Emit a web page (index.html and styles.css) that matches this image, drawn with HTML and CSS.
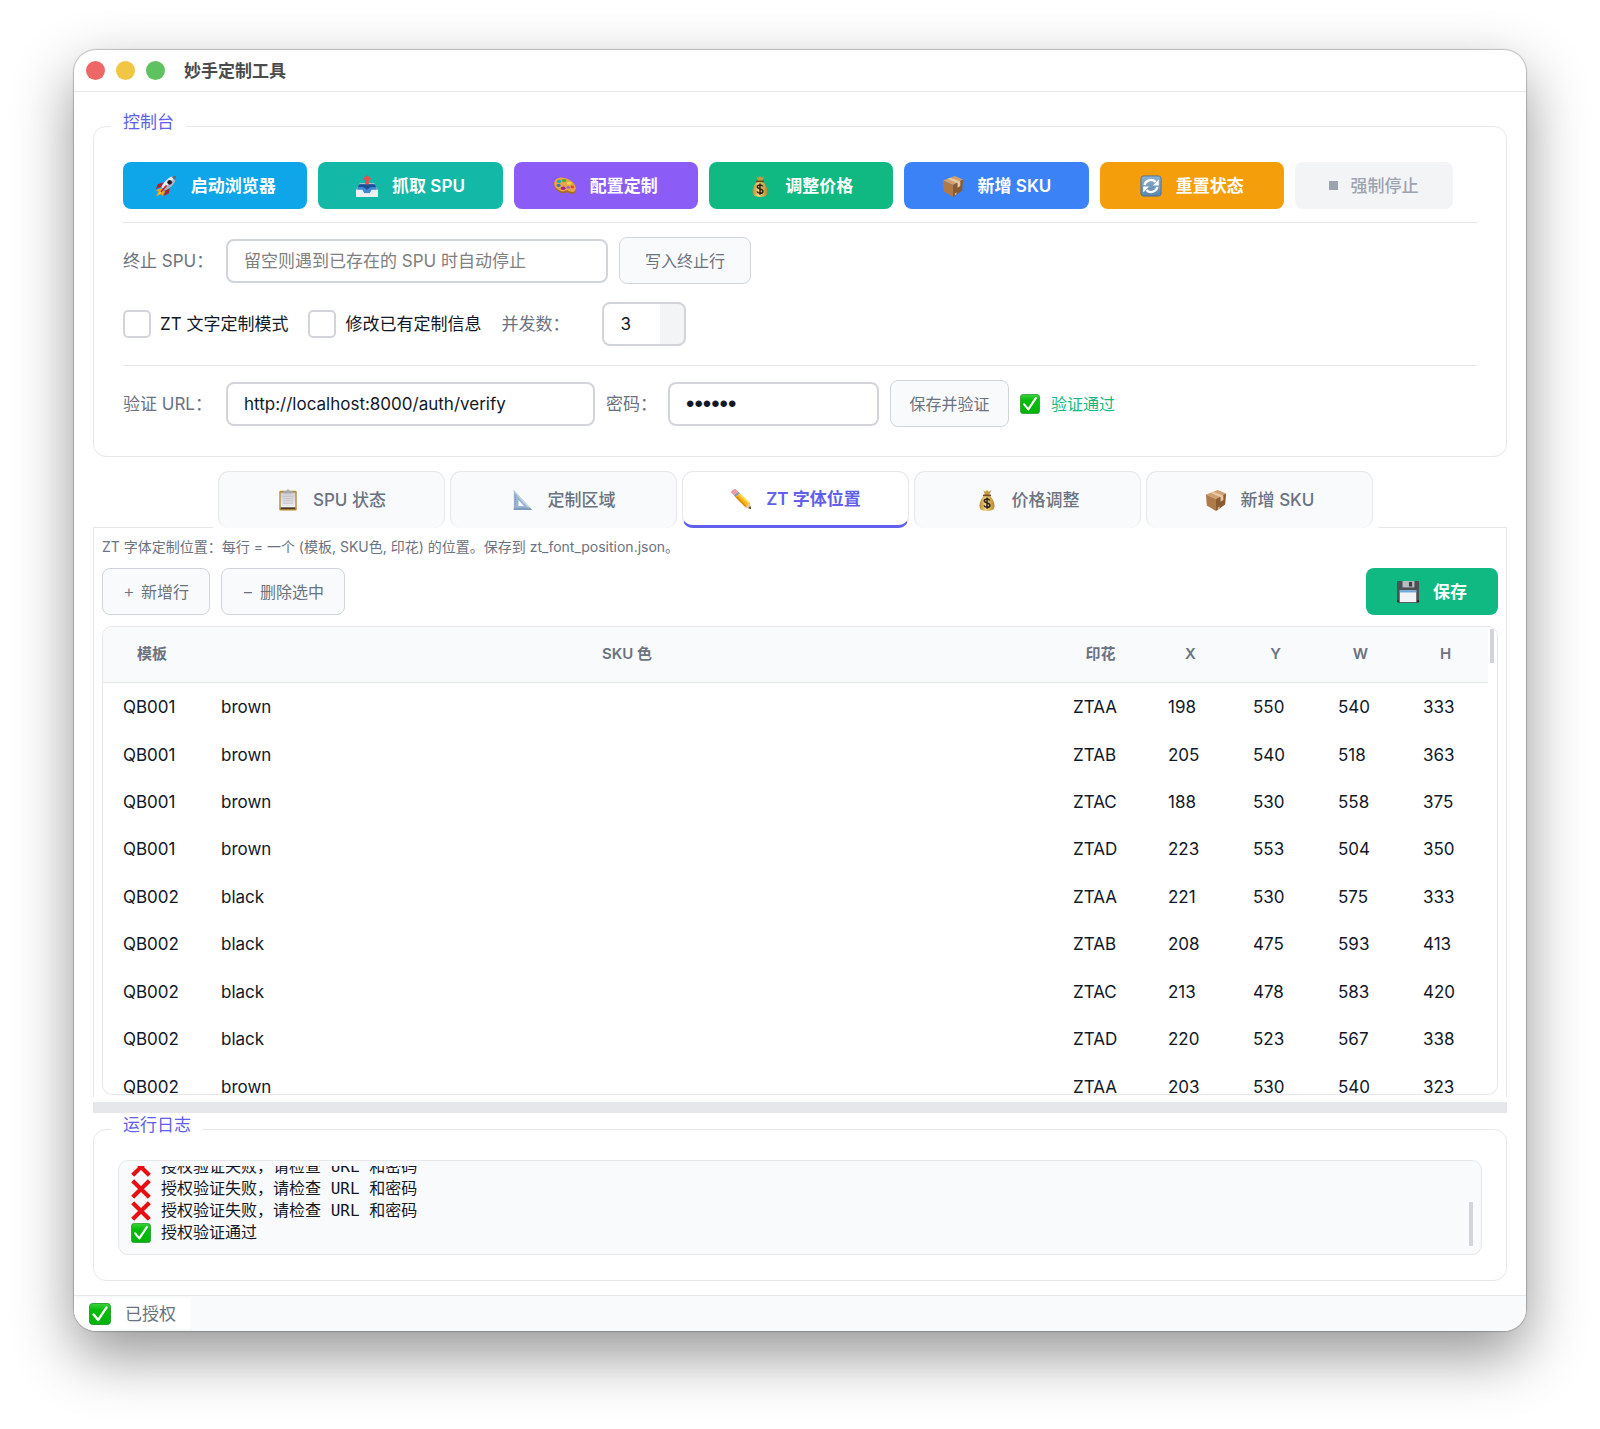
FILE: index.html
```html
<!DOCTYPE html>
<html lang="zh-CN">

<head>
    <meta charset="UTF-8">
    <meta name="viewport" content="width=device-width, initial-scale=1.0">
    <title>妙手定制工具</title>
    <link rel="stylesheet" href="styles.css">
</head>

<body>
    <!-- 图标定义 -->
    <svg class="icon-defs" aria-hidden="true">
        <defs>
            <linearGradient id="g-green" x1="0" y1="0" x2="0" y2="1">
                <stop offset="0" stop-color="#3fd13f" />
                <stop offset="0.3" stop-color="#06bd0c" />
                <stop offset="1" stop-color="#02b306" />
            </linearGradient>
            <linearGradient id="g-blue" x1="0" y1="0" x2="0" y2="1">
                <stop offset="0" stop-color="#8fb0cf" />
                <stop offset="1" stop-color="#5d86ad" />
            </linearGradient>
            <linearGradient id="g-paper" x1="0" y1="0" x2="0" y2="1">
                <stop offset="0" stop-color="#cfcfd4" />
                <stop offset="1" stop-color="#f1f1f3" />
            </linearGradient>
            <linearGradient id="g-gold" x1="0" y1="0" x2="1" y2="0">
                <stop offset="0" stop-color="#b98a35" />
                <stop offset="0.4" stop-color="#f3d57c" />
                <stop offset="1" stop-color="#b58530" />
            </linearGradient>
        </defs>
        <symbol id="i-rocket" viewBox="0 0 24 24">
            <path d="M9 8 3 10 1 15l6-2z" fill="#b5202a" />
            <path d="M16 14l-1 6-5 3 1-7z" fill="#b5202a" />
            <path d="M7 14 1 17l3 1-3 5 6-2 1 2 3-5z" fill="#f5a316" />
            <path d="M7 16l-3 5 5-3z" fill="#ffe95e" />
            <path d="M23 1c-6 0-11 3-16 12l4 4C19 13 23 8 23 1z" fill="#a9b6c6" />
            <path d="M23 1C17 1 12 4 7 13l2 2C14 11 19 6 23 1z" fill="#e6ecf3" />
            <path d="M23 1c-2 0-4 0-5 1l4 4c1-2 1-3 1-5z" fill="#5f6c7d" />
            <circle cx="16" cy="8" r="2.6" fill="#3c2430" />
            <circle cx="16" cy="8" r="1.3" fill="#14151c" />
            <path d="M12 12l-5 6" stroke="#c3232b" stroke-width="2" stroke-linecap="round" />
        </symbol>
        <symbol id="i-inbox" viewBox="0 0 24 24">
            <path d="M4 9h16l4 8v6a1 1 0 0 1-1 1H1a1 1 0 0 1-1-1v-6z" fill="#c9ced5" />
            <path d="M3 10h18l2 6-5 1-3 3H9l-3-3-5-1z" fill="#3f86d6" />
            <path d="M4 10h16l2 3-6 0-4 3-4-3H2z" fill="#1c4f94" />
            <path d="M0 16h7l2 4h6l2-4h7v7a1 1 0 0 1-1 1H1a1 1 0 0 1-1-1z" fill="#edeff2" />
            <path d="M12 0 17 5h-3v5h-4V5H7z" fill="#ee4b4b" />
        </symbol>
        <symbol id="i-palette" viewBox="0 0 24 24">
            <path d="M1 7C4 2 12 3 18 7c5 3 7 8 5 12-2 3-6 1-8 0-2-1-3 1-5 1C4 19-2 13 1 7z" fill="#a86a22" />
            <path d="M1 6C4 1 12 2 18 6c5 3 7 8 5 11-2 3-6 1-8 0-2-1-3 1-5 1C4 17-2 12 1 6z" fill="#e5a548" />
            <ellipse cx="5.500" cy="7" rx="2.300" ry="1.700" fill="#18a8c9" />
            <ellipse cx="11" cy="6" rx="2.300" ry="1.700" fill="#3fae49" />
            <ellipse cx="5" cy="11.500" rx="2.200" ry="1.600" fill="#3a6fd0" />
            <ellipse cx="16.500" cy="9" rx="2.300" ry="1.600" fill="#f0da32" />
            <ellipse cx="20" cy="13" rx="2" ry="1.600" fill="#e5472d" />
            <ellipse cx="10" cy="14.500" rx="2.600" ry="1.900" fill="#a3238e" />
            <ellipse cx="15.500" cy="13.500" rx="1.800" ry="1.300" fill="#8b5cf6" />
        </symbol>
        <symbol id="i-money" viewBox="0 0 24 24">
            <path d="M8 1l2 2 2-2 2 2 3-2-3 6h-4z" fill="#c79a45" />
            <path d="M9 7h6c3 3 6 8 5 13-.500 3-3 4-8 4s-7.500-1-8-4C3 15 6 10 9 7z" fill="url(#g-gold)" />
            <path d="M8.500 7h7" stroke="#7a4a1c" stroke-width="2" stroke-linecap="round" />
            <path d="M15 12.500c-.500-1.200-1.600-1.700-3-1.700-1.600 0-2.900.8-2.900 2.100 0 3.200 6.100 1.400 6.100 4.700 0 1.500-1.400 2.400-3.200 2.400-1.600 0-2.900-.7-3.300-2.100M12 9.300v12.300"
                fill="none" stroke="#2a2417" stroke-width="1.600" />
        </symbol>
        <symbol id="i-box" viewBox="0 0 24 24">
            <path d="M1 6 14 1l9 4-11 6z" fill="#d2a06f" />
            <path d="M1 6l11 5v13L2 18z" fill="#b07a48" />
            <path d="M12 11l11-6-1 12-10 7z" fill="#8a5a30" />
            <path d="M6 4l11 5v5l3-2V7L9 3z" fill="#e6c9a4" />
            <path d="M14 20l2-1v2l-2 1z" fill="#d8b48a" />
        </symbol>
        <symbol id="i-refresh" viewBox="0 0 24 24">
            <rect x="1" y="1" width="22" height="22" rx="3" fill="url(#g-blue)" stroke="#47719b" />
            <path d="M5 11a7 6.500 0 0 1 12-3.500M19 13a7 6.500 0 0 1-12 3.500" fill="none" stroke="#fff" stroke-width="2.500" />
            <path d="M20.500 5v6.500H14zM3.500 19v-6.500H10z" fill="#fff" />
        </symbol>
        <symbol id="i-clipboard" viewBox="0 0 24 24">
            <rect x="2.500" y="2" width="19" height="21.500" rx="1.500" fill="#b58a3e" />
            <rect x="4" y="4" width="16" height="17.500" fill="url(#g-paper)" />
            <path d="M4 20h16v2H4z" fill="#4a3a25" />
            <path d="M7 2.500h3L11 .500h2l1 2h3V5H7z" fill="#a8acb3" />
            <path d="M6.500 8h11M6.500 10.500h11M6.500 13h11M6.500 15.500h11" stroke="#bfc0c6" />
        </symbol>
        <symbol id="i-ruler" viewBox="0 0 24 24">
            <path d="M2 1l20 22H2zM7 12v6.500h6z" fill="#9bb4d0" fill-rule="evenodd" />
            <path d="M2 1l20 22-3-1L3 4z" fill="#c5d5e6" />
            <path d="M2 20.500h18L22 23H2z" fill="#7f9cbd" />
            <path d="M3.500 7v12" stroke="#6f8cad" stroke-dasharray="1 1" />
        </symbol>
        <symbol id="i-pencil" viewBox="0 0 24 24">
            <path d="M1 5c0-2 3-4 5-4l3 3-5 4z" fill="#ee9aa5" />
            <path d="M4 8l5-4 2 2-5 4z" fill="#8f9aa5" />
            <path d="M6 10l5-4 10.500 10L23 23l-6-2z" fill="#f7b917" />
            <path d="M6 10l1.700-1.300 11 11.800L17 21z" fill="#d98a0c" />
            <path d="M9.500 7.200 11 6l10.500 10-1.500 1z" fill="#ffdc55" />
            <path d="M21.500 16 23 23l-6-2 1.500-2.500z" fill="#e9c39a" />
            <path d="M22.300 20l.7 3-3-1z" fill="#333" />
        </symbol>
        <symbol id="i-floppy" viewBox="0 0 24 24">
            <path d="M1 0h22a1 1 0 0 1 1 1v22a1 1 0 0 1-1 1H1a1 1 0 0 1-1-1V1a1 1 0 0 1 1-1z" fill="#4d5054" />
            <path d="M6 0h13v7H6z" fill="#b9bcc0" />
            <path d="M13 1h3.500v5H13z" fill="#3c3f43" />
            <path d="M3 10h18v13H3z" fill="#f2f3f4" />
            <path d="M3 10h18v2.500H3z" fill="#6fa8d6" />
            <path d="M0 21h2v2H0zM22 21h2v2h-2z" fill="#222" />
        </symbol>
        <symbol id="i-check" viewBox="0 0 24 24">
            <rect x="0.500" y="0.500" width="23" height="23" rx="3.500" fill="url(#g-green)" stroke="#1f9a2a" />
            <path d="M5 12.500 10 18.500 19 5" fill="none" stroke="#fff" stroke-width="2.600" stroke-linecap="round"
                stroke-linejoin="round" />
        </symbol>
        <symbol id="i-cross" viewBox="0 0 24 24">
            <path d="M2 2l20 20M22 2l-20 20" stroke="#e60f12" stroke-width="5" />
        </symbol>
    </svg>

    <div class="window">
        <header class="titlebar">
            <span class="light light-red"></span>
            <span class="light light-yellow"></span>
            <span class="light light-green"></span>
            <h1 class="title">妙手定制工具</h1>
        </header>

        <main class="content">
            <fieldset class="group">
                <legend>控制台</legend>

                <div class="actions">
                    <button type="button" class="btn btn-sky"><svg class="icon"><use href="#i-rocket" /></svg>启动浏览器</button>
                    <button type="button" class="btn btn-teal"><svg class="icon"><use href="#i-inbox" /></svg>抓取 SPU</button>
                    <button type="button" class="btn btn-purple"><svg class="icon"><use href="#i-palette" /></svg>配置定制</button>
                    <button type="button" class="btn btn-green"><svg class="icon"><use href="#i-money" /></svg>调整价格</button>
                    <button type="button" class="btn btn-blue"><svg class="icon"><use href="#i-box" /></svg>新增 SKU</button>
                    <button type="button" class="btn btn-orange"><svg class="icon"><use href="#i-refresh" /></svg>重置状态</button>
                    <button type="button" class="btn btn-stop" disabled><span class="stop-mark"></span>强制停止</button>
                </div>

                <hr class="line">

                <div class="row">
                    <label class="label" for="stop-spu">终止 SPU：</label>
                    <input class="input input-spu" id="stop-spu" type="text" placeholder="留空则遇到已存在的 SPU 时自动停止">
                    <button type="button" class="btn-plain btn-write">写入终止行</button>
                </div>

                <div class="row row-options">
                    <label class="check"><input type="checkbox">ZT 文字定制模式</label>
                    <label class="check"><input type="checkbox">修改已有定制信息</label>
                    <label class="label label-count" for="count">并发数：</label>
                    <input class="input input-count" id="count" type="number" value="3">
                </div>

                <hr class="line">

                <div class="row">
                    <label class="label" for="url">验证 URL：</label>
                    <input class="input input-url" id="url" type="text" value="http://localhost:8000/auth/verify">
                    <label class="label label-pwd" for="pwd">密码：</label>
                    <input class="input input-pwd" id="pwd" type="password" value="123456">
                    <button type="button" class="btn-plain btn-verify">保存并验证</button>
                    <span class="verified"><svg class="icon icon-small"><use href="#i-check" /></svg>验证通过</span>
                </div>
            </fieldset>

            <div class="tabs" role="tablist">
                <button type="button" class="tab" role="tab"><svg class="icon"><use href="#i-clipboard" /></svg>SPU 状态</button>
                <button type="button" class="tab" role="tab"><svg class="icon"><use href="#i-ruler" /></svg>定制区域</button>
                <button type="button" class="tab active" role="tab" aria-selected="true"><svg class="icon"><use href="#i-pencil" /></svg>ZT 字体位置</button>
                <button type="button" class="tab" role="tab"><svg class="icon"><use href="#i-money" /></svg>价格调整</button>
                <button type="button" class="tab" role="tab"><svg class="icon"><use href="#i-box" /></svg>新增 SKU</button>
            </div>

            <section class="pane">
                <p class="hint">ZT 字体定制位置：每行 = 一个 (模板, SKU色, 印花) 的位置。保存到 zt_font_position.json。</p>
                <div class="toolbar">
                    <button type="button" class="btn-plain btn-add"><span class="sign">+</span>新增行</button>
                    <button type="button" class="btn-plain btn-del"><span class="sign">−</span>删除选中</button>
                    <button type="button" class="btn btn-green btn-save"><svg class="icon"><use href="#i-floppy" /></svg>保存</button>
                </div>

                <div class="table-box">
                    <table>
                        <colgroup>
                            <col class="col-tpl">
                            <col>
                            <col class="col-print">
                            <col class="col-num">
                            <col class="col-num">
                            <col class="col-num">
                            <col class="col-num">
                        </colgroup>
                        <thead>
                            <tr><th>模板</th><th>SKU 色</th><th>印花</th><th>X</th><th>Y</th><th>W</th><th>H</th></tr>
                        </thead>
                        <tbody>
                            <tr><td>QB001</td><td>brown</td><td>ZTAA</td><td>198</td><td>550</td><td>540</td><td>333</td></tr>
                            <tr><td>QB001</td><td>brown</td><td>ZTAB</td><td>205</td><td>540</td><td>518</td><td>363</td></tr>
                            <tr><td>QB001</td><td>brown</td><td>ZTAC</td><td>188</td><td>530</td><td>558</td><td>375</td></tr>
                            <tr><td>QB001</td><td>brown</td><td>ZTAD</td><td>223</td><td>553</td><td>504</td><td>350</td></tr>
                            <tr><td>QB002</td><td>black</td><td>ZTAA</td><td>221</td><td>530</td><td>575</td><td>333</td></tr>
                            <tr><td>QB002</td><td>black</td><td>ZTAB</td><td>208</td><td>475</td><td>593</td><td>413</td></tr>
                            <tr><td>QB002</td><td>black</td><td>ZTAC</td><td>213</td><td>478</td><td>583</td><td>420</td></tr>
                            <tr><td>QB002</td><td>black</td><td>ZTAD</td><td>220</td><td>523</td><td>567</td><td>338</td></tr>
                            <tr><td>QB002</td><td>brown</td><td>ZTAA</td><td>203</td><td>530</td><td>540</td><td>323</td></tr>
                        </tbody>
                    </table>
                    <span class="thumb thumb-table"></span>
                </div>
            </section>

            <div class="splitter"></div>

            <fieldset class="group group-log">
                <legend>运行日志</legend>
                <div class="log">
                    <div class="log-lines">
                        <p><svg class="icon icon-small"><use href="#i-cross" /></svg>授权验证失败，请检查 URL 和密码</p>
                        <p><svg class="icon icon-small"><use href="#i-cross" /></svg>授权验证失败，请检查 URL 和密码</p>
                        <p><svg class="icon icon-small"><use href="#i-cross" /></svg>授权验证失败，请检查 URL 和密码</p>
                        <p><svg class="icon icon-small"><use href="#i-check" /></svg>授权验证通过</p>
                    </div>
                    <span class="thumb thumb-log"></span>
                </div>
            </fieldset>
        </main>

        <footer class="statusbar">
            <span class="status"><svg class="icon"><use href="#i-check" /></svg>已授权</span>
        </footer>
    </div>
</body>

</html>
```
FILE: styles.css
```css
* {
    margin: 0;
    padding: 0;
    box-sizing: border-box;
}

body {
    height: 100vh;
    padding: 50px 74px 98px;
    background: #fff;
    color: #111827;
    font-family: Inter, 'Noto Sans CJK SC', sans-serif;
    font-size: 17px;
    line-height: 24px;
}

button,
input {
    font: inherit;
    color: inherit;
}

.icon-defs {
    position: absolute;
    width: 0;
    height: 0;
}

.icon {
    flex: none;
    width: 22px;
    height: 22px;
}

.icon-small {
    width: 20px;
    height: 20px;
}

/* 窗口 */
.window {
    display: flex;
    flex-direction: column;
    height: 100%;
    overflow: hidden;
    background: #fff;
    border-radius: 22px;
    box-shadow: 0 0 1px 1px rgba(0, 0, 0, 0.2), 0 24px 60px rgba(0, 0, 0, 0.42);
}

.titlebar {
    display: flex;
    align-items: center;
    gap: 11px;
    height: 42px;
    padding-left: 12px;
    border-bottom: 1px solid #e5e7e9;
}

.light {
    width: 19px;
    height: 19px;
    border-radius: 50%;
}

.light-red {
    background: #ec6765;
}

.light-yellow {
    background: #f2c645;
}

.light-green {
    background: #5fc15f;
}

.title {
    margin-left: 8px;
    color: #4b4b4b;
    font-size: 17px;
    font-weight: 600;
}

.content {
    display: flex;
    flex: 1;
    flex-direction: column;
    min-height: 0;
    padding: 18px 19px 14px;
}

/* 分组框 */
.group {
    min-width: 0;
    padding: 20px 29px 29px;
    border: 1px solid #e5e7eb;
    border-radius: 13px;
}

.group legend {
    margin-left: -12px;
    padding: 0 12px 8px;
    color: #6060ea;
}

.line {
    height: 1px;
    border: 0;
    background: #e5e7eb;
}

.actions {
    display: flex;
    gap: 11px;
    margin-bottom: 13px;
    padding-right: 24px;
}

.btn {
    display: flex;
    flex: 1;
    align-items: center;
    justify-content: center;
    gap: 14px;
    height: 47px;
    border: 0;
    border-radius: 8px;
    color: #fff;
    font-weight: 600;
}

.btn-sky {
    background: #0fa5e9;
}

.btn-teal {
    background: #14b8a6;
}

.btn-purple {
    background: #8b5cf6;
}

.btn-green {
    background: #10b981;
}

.btn-blue {
    background: #3b82f6;
}

.btn-orange {
    background: #f59e0b;
}

.btn-stop {
    flex: 0 0 158px;
    gap: 12px;
    background: #f3f4f6;
    color: #9ca3af;
    font-weight: 500;
}

.stop-mark {
    width: 9px;
    height: 9px;
    background: #9ca3af;
}

.btn-plain {
    height: 47px;
    border: 1px solid #d1d5db;
    border-radius: 8px;
    background: #f9fafb;
    color: #6b7280;
    font-size: 16px;
}

.btn-write {
    width: 132px;
}

.btn-verify {
    width: 119px;
}

.btn-add {
    width: 108px;
}

.btn-del {
    width: 124px;
}

.sign {
    margin-right: 6px;
    font-size: 18px;
    font-weight: 300;
}

.row {
    display: flex;
    align-items: center;
    gap: 11px;
    margin-top: 14px;
}

.row-options {
    margin: 18px 0 19px;
}

.label {
    width: 92px;
    color: #6b7280;
    white-space: nowrap;
}

.label-count {
    width: 90px;
}

.label-pwd {
    width: 51px;
}

.input {
    height: 44px;
    padding: 0 16px;
    border: 2px solid #d1d5db;
    border-radius: 8px;
    outline: 0;
    background: #fff;
}

.input::placeholder {
    color: #808080;
}

.input-spu {
    width: 382px;
}

.input-url {
    width: 369px;
}

.input-pwd {
    width: 211px;
    font-family: 'Liberation Sans', sans-serif;
    font-size: 24px;
}

.input-count {
    width: 84px;
    background: linear-gradient(to right, #fff 56px, #f3f4f6 56px);
    appearance: textfield;
}

.input-count::-webkit-inner-spin-button {
    display: none;
}

.check {
    display: flex;
    align-items: center;
    gap: 9px;
    margin-right: 9px;
}

.check input {
    width: 28px;
    height: 28px;
    border: 2px solid #d1d5db;
    border-radius: 5px;
    background: #fff;
    appearance: none;
}

.verified {
    display: flex;
    align-items: center;
    gap: 11px;
    color: #10b981;
    font-size: 16px;
}

/* 标签页 */
.tabs {
    display: flex;
    gap: 5px;
    margin-top: 14px;
}

.tabs::before,
.tabs::after {
    content: '';
    align-self: flex-end;
    height: 1px;
    background: #e5e7eb;
}

.tabs::before {
    flex: 0 0 120px;
}

.tabs::after {
    flex: 1;
}

.tab {
    display: flex;
    align-items: center;
    justify-content: center;
    gap: 14px;
    width: 227px;
    height: 57px;
    border: 1px solid #e5e7eb;
    border-bottom: 0;
    border-radius: 11px;
    background: #f9fafb;
    color: #6b7280;
    font-weight: 500;
}

.tab.active {
    border-bottom: 3px solid #6060ea;
    background: #fff;
    color: #6060ea;
    font-weight: 600;
}

.pane {
    display: flex;
    flex: 1;
    flex-direction: column;
    min-height: 0;
    margin-bottom: 5px;
    padding: 8px 8px 2px;
    border: solid #e5e7eb;
    border-width: 0 1px;
}

.hint {
    color: #6b7280;
    font-size: 14px;
    line-height: 22px;
}

.toolbar {
    display: flex;
    gap: 11px;
    margin: 10px 0 11px;
}

.btn-save {
    flex: 0 0 132px;
    margin-left: auto;
}

/* 表格 */
.table-box {
    position: relative;
    flex: 1;
    min-height: 0;
    overflow: hidden;
    padding-right: 9px;
    border: 1px solid #e5e7eb;
    border-radius: 10px;
}

table {
    width: 100%;
    height: 483px;
    border-collapse: collapse;
    table-layout: fixed;
}

.col-tpl {
    width: 98px;
}

.col-print {
    width: 95px;
}

.col-num {
    width: 85px;
}

th {
    height: 55px;
    border-bottom: 1px solid #e5e7eb;
    background: #f9fafb;
    color: #6b7280;
    font-size: 15px;
    font-weight: 600;
}

td {
    padding: 1px 0 0 20px;
}

.thumb {
    position: absolute;
    width: 4px;
    background: #d1d5db;
}

.thumb-table {
    top: 2px;
    right: 3px;
    height: 34px;
}

.splitter {
    height: 11px;
    background: #e5e7eb;
}

/* 日志 */
.group-log {
    padding: 15px 24px 25px;
}

.group-log legend {
    margin-left: -7px;
}

.log {
    position: relative;
    height: 95px;
    padding: 5px 12px 10px;
    border: 1px solid #e5e7eb;
    border-radius: 10px;
    background: #f9fafb;
}

.log-lines {
    display: flex;
    flex-direction: column;
    justify-content: flex-end;
    height: 100%;
    overflow: hidden;
    font-family: 'DejaVu Sans Mono', 'Noto Sans CJK SC', monospace;
    font-size: 16px;
    line-height: 22px;
}

.log-lines p {
    display: flex;
    flex: none;
    align-items: center;
    gap: 10px;
    height: 22px;
}

.thumb-log {
    right: 8px;
    bottom: 8px;
    height: 44px;
}

/* 状态栏 */
.statusbar {
    height: 36px;
    padding: 2px 0;
    border-top: 1px solid #e5e7eb;
    background: #f9fafb;
}

.status {
    display: flex;
    align-items: center;
    gap: 14px;
    width: 116px;
    height: 100%;
    padding-left: 15px;
    background: #fff;
    color: #6b7280;
}
```
